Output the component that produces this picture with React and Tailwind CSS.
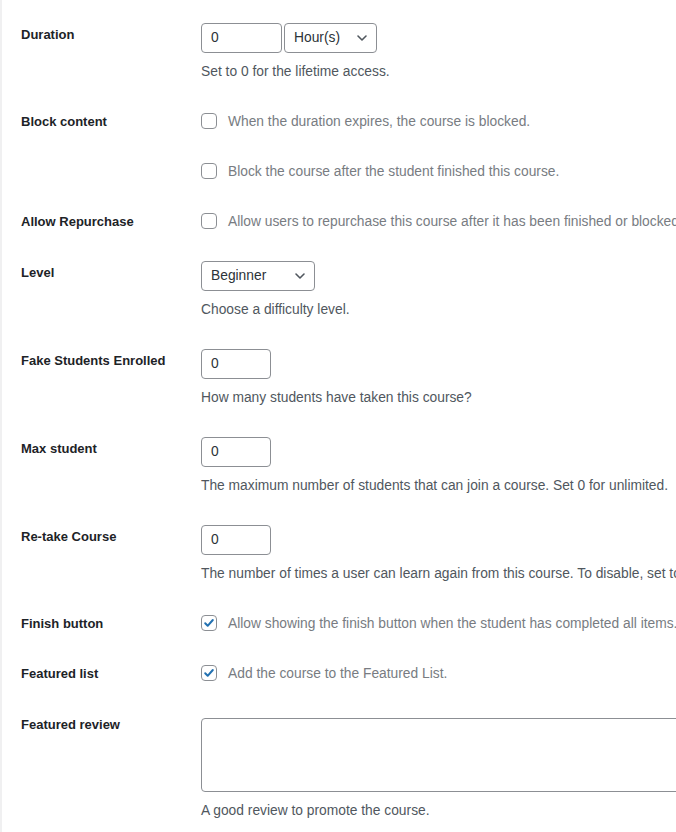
import React from "react";

function Row({ label, children, labelTop = "pt-[18px]" }) {
  return (
    <div className="flex">
      <div className={`w-[201px] shrink-0 pl-[21px] ${labelTop} text-[13px] leading-[18px] font-semibold text-[#1d2327]`}>
        {label}
      </div>
      <div className="flex-1 min-w-0">{children}</div>
    </div>
  );
}

function Desc({ children }) {
  return (
    <p className="mt-[10px] pb-[15px] text-[13.8px] leading-[18px] text-[#50575e] whitespace-nowrap">
      {children}
    </p>
  );
}

function Chevron() {
  return (
    <svg width="12" height="12" viewBox="0 0 12 12" fill="none" className="shrink-0">
      <path d="M2 4l4 4 4-4" stroke="#50575e" strokeWidth="1.6" strokeLinecap="round" strokeLinejoin="round" />
    </svg>
  );
}

function Box({ checked }) {
  return (
    <span className="w-4 h-4 shrink-0 rounded-[4px] border border-[#8c8f94] bg-white flex items-center justify-center">
      {checked && (
        <svg width="12" height="12" viewBox="0 0 12 12" fill="none">
          <path d="M2.2 6.3l2.5 2.5L9.8 3" stroke="#2271b1" strokeWidth="2" strokeLinecap="round" strokeLinejoin="round" />
        </svg>
      )}
    </span>
  );
}

function CheckRow({ label, text, checked }) {
  return (
    <Row label={label} labelTop="pt-[17px]">
      <div className="h-[50px] flex items-center gap-[11px] text-[13.8px] leading-[20px] text-[#787c82] whitespace-nowrap">
        <Box checked={checked} />
        <span className="pt-[1px]">{text}</span>
      </div>
    </Row>
  );
}

function NumInput({ w = "w-[70px]" }) {
  return (
    <div className={`${w} h-[30px] rounded-[4px] border border-[#8c8f94] bg-white px-[9px] flex items-center text-[13.8px] text-[#2c3338]`}>
      0
    </div>
  );
}

function Select({ value, w }) {
  return (
    <div className={`${w} h-[30px] rounded-[4px] border border-[#8c8f94] bg-white pl-[9px] pr-[8px] flex items-center justify-between text-[13.8px] text-[#2c3338]`}>
      <span>{value}</span>
      <Chevron />
    </div>
  );
}

function InputRow({ label, desc, children }) {
  return (
    <Row label={label}>
      <div className="pt-[15px]">
        <div className="flex gap-[2px]">{children}</div>
        <Desc>{desc}</Desc>
      </div>
    </Row>
  );
}

export default function App() {
  return (
    <div
      className="w-[676px] h-[832px] overflow-hidden bg-white border-l-2 border-[#f0f0f1]"
      style={{ fontFamily: '"Liberation Sans", Arial, sans-serif' }}
    >
      <div className="pt-[8px] -ml-[2px]">
        <InputRow label="Duration" desc="Set to 0 for the lifetime access.">
          <NumInput w="w-[81px]" />
          <Select value="Hour(s)" w="w-[93px]" />
        </InputRow>

        <CheckRow label="Block content" text="When the duration expires, the course is blocked." />
        <CheckRow label="" text="Block the course after the student finished this course." />
        <CheckRow
          label="Allow Repurchase"
          text="Allow users to repurchase this course after it has been finished or blocked."
        />

        <InputRow label="Level" desc="Choose a difficulty level.">
          <Select value="Beginner" w="w-[114px]" />
        </InputRow>

        <InputRow label="Fake Students Enrolled" desc="How many students have taken this course?">
          <NumInput />
        </InputRow>

        <InputRow
          label="Max student"
          desc="The maximum number of students that can join a course. Set 0 for unlimited."
        >
          <NumInput />
        </InputRow>

        <InputRow
          label="Re-take Course"
          desc="The number of times a user can learn again from this course. To disable, set to 0."
        >
          <NumInput />
        </InputRow>

        <CheckRow
          label="Finish button"
          checked
          text="Allow showing the finish button when the student has completed all items."
        />
        <CheckRow label="Featured list" checked text="Add the course to the Featured List." />

        <Row label="Featured review">
          <div className="pt-[20px]">
            <div className="h-[74px] w-[520px] rounded-[4px] border border-[#8c8f94] bg-white" />
            <Desc>A good review to promote the course.</Desc>
          </div>
        </Row>
      </div>
    </div>
  );
}
